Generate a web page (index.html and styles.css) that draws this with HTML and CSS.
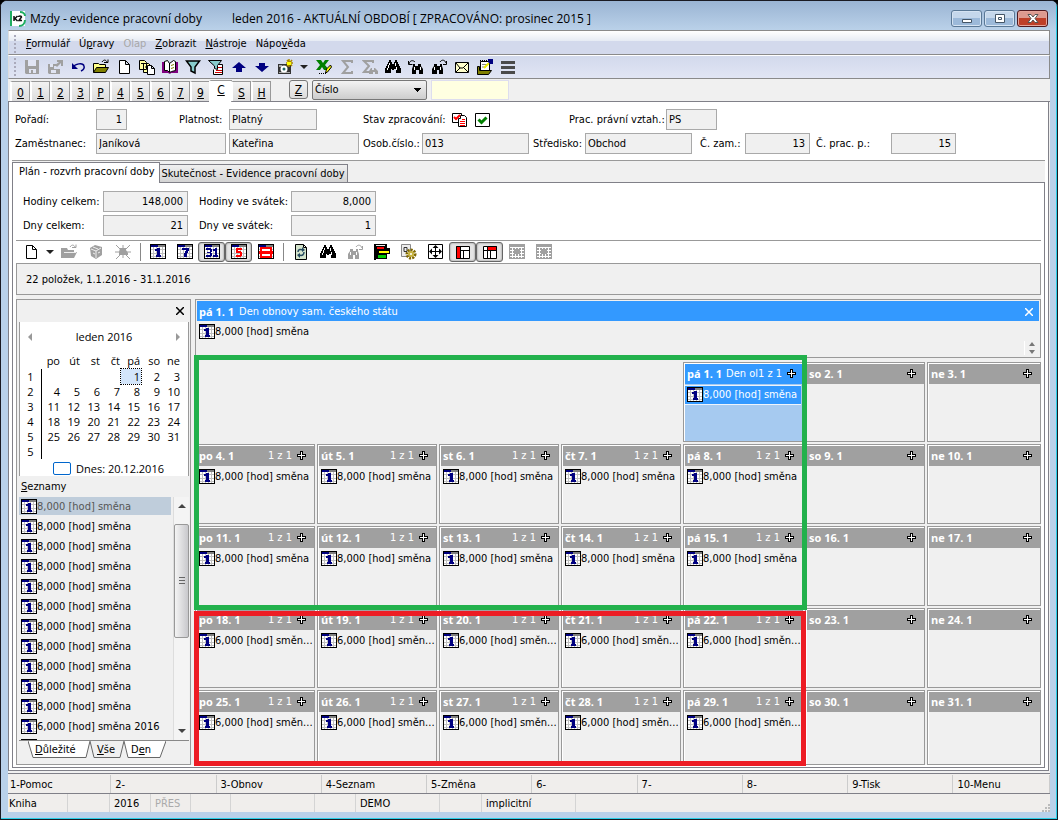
FILE: index.html
```html
<!DOCTYPE html>
<html lang="cs">
<head>
<meta charset="utf-8">
<title>Mzdy - evidence pracovní doby</title>
<link rel="stylesheet" href="styles.css">
</head>
<body>
<svg class="defs" aria-hidden="true">
  <defs>
    <symbol id="cal" viewBox="0 0 16 15" preserveAspectRatio="xMinYMin"><path fill="#000" d="M0 0h16v15H0z"/><path fill="#fff" d="M1 3h14v11H1z"/><path fill="#000080" d="M1 1h7v2H1z"/><path fill="#808080" d="M8 1h7v2H8z"/><path stroke="#c0c0c0" d="M1 5.500h14M1 9.500h14M1 12.500h14M3.500 3v11M6.500 3v11M9.500 3v11M12.500 3v11"/></symbol>
    <symbol id="cal1" viewBox="0 0 16 15" preserveAspectRatio="xMinYMin"><use href="#cal"/><path fill="#000080" d="M7 4h3v7h1v2H6v-2h1V7H5V5h2z"/></symbol>
    <symbol id="cal7" viewBox="0 0 16 15" preserveAspectRatio="xMinYMin"><use href="#cal"/><path fill="#000080" d="M5 4h7v3h-1v2h-1v4H7V9h1V7h1V6H5z"/></symbol>
    <symbol id="cal31" viewBox="0 0 16 15" preserveAspectRatio="xMinYMin"><use href="#cal"/><path fill="#000080" d="M2 4h5v1h1v3H7v1h1v3H7v1H2v-2h4V9H3V8h3V6H2zM11 4h2v7h1v2H9v-2h2V7H9V5h2z"/></symbol>
    <symbol id="cal5" viewBox="0 0 16 15" preserveAspectRatio="xMinYMin"><use href="#cal"/><path fill="#f00" d="M5 4h6v2H7v1h3v1h1v4h-1v1H5v-2h4V9H5z"/></symbol>
    <symbol id="calred" viewBox="0 0 16 15" preserveAspectRatio="xMinYMin"><use href="#cal"/><path fill="#f00" d="M2 3h12v4h1v3h-1v4H2v-4H1V7h1z"/><path fill="#fff" d="M4 5h8v2H4zM4 10h8v2H4z"/></symbol>
    <symbol id="plus" viewBox="0 0 9 9"><path fill="#000" d="M3 0h3v3h3v3H6v3H3V6H0V3h3z"/><path fill="#fff" d="M4 1h1v3h3v1H5v3H4V5H1V4h3z"/></symbol>
    <symbol id="save" viewBox="0 0 16 16"><path fill="#a0a0a0" d="M1 1h14v14H2l-1-1z"/><path fill="#e1e5f3" d="M4 1h8v6H4zM5 10h7v4H9v-3H7v3H5z"/></symbol>
    <symbol id="export" viewBox="0 0 16 16"><path fill="#a0a0a0" d="M1 5h8v2H7v3h6v5H2l-1-1zM10 1h6v6h-2V4l-4 4-2-2 4-3h-2z"/><path fill="#e1e5f3" d="M3 5h3v3H3zM4 11h5v3H4z"/></symbol>
    <symbol id="undo" viewBox="0 0 16 16"><path fill="none" stroke="#000080" stroke-width="1.500" d="M3 8c2-3 10-5 11-1 1 3-1 4-3 5"/><path fill="#000080" d="M2 4v6h6z"/></symbol>
    <symbol id="folder" viewBox="0 0 16 16"><path fill="#ff8" stroke="#000" d="M.5 13.500v-9h5l1 1h6v3"/><path fill="#808000" stroke="#000" d="M.5 13.500l3-5h12l-3 5z"/><path fill="none" stroke="#000" d="M9 3c2-3 4-2 5 0m-3 .5h4v-3"/></symbol>
    <symbol id="folderg" viewBox="0 0 16 16"><path fill="#a0a0a0" d="M0 14V4h6l1 2h6v2h3l-3 6z"/><path fill="none" stroke="#a0a0a0" d="M9 3c2-3 4-2 5 0m-3 .5h4v-3"/><path stroke="#eee" d="M3 8.500h12"/></symbol>
    <symbol id="new" viewBox="0 0 16 16"><path fill="#fff" stroke="#000" d="M3.500 1.500h6l4 4v9h-10zM9.500 1.500v4h4"/></symbol>
    <symbol id="copies" viewBox="0 0 16 16"><path fill="#ffffa0" stroke="#000" d="M.5 1.500h5l2 2v7h-7zM4.500 4.500h5l2 2v7h-7z"/><path fill="#fff" stroke="#000" d="M8.500 6.500h4l3 3v6h-7zM2 4.500h3M6 8h2M12.500 6.500v3h3"/></symbol>
    <symbol id="book" viewBox="0 0 16 16"><path fill="#800080" d="M0 3h3l5 10 5-10h3v11H9l-1 1-2-1H0z"/><path fill="#fff" stroke="#000" d="M2.500 11.500v-9l3-1 2 3 4-3 2 1v9l-4 1-2 1-2-2z"/><path stroke="#000" d="M7.500 4v9"/><path stroke="#808000" d="M9 6.500l3-1M9 9.500l3-1"/></symbol>
    <symbol id="filter" viewBox="0 0 16 16"><path fill="#8cc" stroke="#000" stroke-width="1.500" d="M1.500 2h13L10 8v6l-4-2V8z"/></symbol>
    <symbol id="filterdoc" viewBox="0 0 16 16"><path fill="#fff" stroke="#000" d="M7.500 5.500h7v10h-9v-5"/><path fill="#8cc" stroke="#000" d="M.5 1.500h13l-4 5v4l-3-1V7z"/><path stroke="#c00" d="M10 8.500h4M8 11.500h6M7 13.500h7"/></symbol>
    <symbol id="up" viewBox="0 0 16 16"><path fill="#000080" d="M8 3l7 6h-4v4H5V9H1z"/></symbol>
    <symbol id="down" viewBox="0 0 16 16"><path fill="#000080" d="M8 13l7-6h-4V4H5v3H1z"/></symbol>
    <symbol id="camera" viewBox="0 0 16 16"><path fill="#333" d="M1 5h13v10H1z"/><path fill="#aaa" d="M2 6h3v2H2zM2 13h11v1H2z"/><circle cx="7" cy="10" r="3.500" fill="#fff"/><circle cx="7" cy="10" r="1.500" fill="#266"/><path stroke="#a80" stroke-width="1.500" d="M12 0v8M9 4h7M10 1l5 6M15 1l-5 6"/><path fill="#ff0" d="M10 3h4v3h-4z"/></symbol>
    <symbol id="arrow" viewBox="0 0 8 8"><path fill="#222" d="M0 2h8L4 6z"/></symbol>
    <symbol id="excel" viewBox="0 0 16 16"><path fill="#008000" d="M0 1h5l2 3 2-3h4L9 6l4 5H8L6 8l-2 3H0l4-5z"/><path fill="#ff0" stroke="#000" d="M9.500 14l1-4 4-4 1 2-4 5z"/><path stroke="#000" stroke-dasharray="1 1" d="M3 14.500h8"/></symbol>
    <symbol id="sum" viewBox="0 0 16 16"><path fill="none" stroke="#a0a0a0" stroke-width="2" d="M13 4V2H4l5 6-5 6h9v-2"/></symbol>
    <symbol id="sum2" viewBox="0 0 16 16"><path fill="none" stroke="#a0a0a0" stroke-width="2" d="M11 4V2H2l5 5-5 6h7"/><path fill="#a0a0a0" d="M7 15v-3l2-3h1v2h2V9h1l3 3v3h-3v-2h-2v2z"/></symbol>
    <symbol id="binoc" viewBox="0 0 16 16"><path fill="currentColor" d="M4 1h2v2h1v2h2V3h1V1h2v2h1v2h1v2h1v2h1v5h-5v-4H9v1H7v-1H6v4H0V9h1V7h1V5h1V3h1z"/><path stroke="#fff" d="M4.500 4v2M3.500 6v3M2.500 9v2M10.500 4v3M11.500 8v3"/></symbol>
    <symbol id="binocl" viewBox="0 0 16 16"><path fill="currentColor" d="M5 5h2v2h3V5h3v2l2 3v5h-4v-4H8v4H4v-5l1-3z"/><path fill="none" stroke="currentColor" d="M1 5c1-4 4-4 6-2M.5 2v3.500h4"/><path stroke="#fff" d="M6.500 8v3M12.500 8v3"/></symbol>
    <symbol id="binocr" viewBox="0 0 16 16"><path fill="currentColor" d="M3 5h3v2h3V5h2v2l1 3v5H8v-4H6v4H1v-5l2-3z"/><path fill="none" stroke="currentColor" d="M9 3c2-3 5-2 6 1m-3 1.500h3.500V2"/><path stroke="#fff" d="M3.500 8v3M9.500 8v3"/></symbol>
    <symbol id="mail" viewBox="0 0 16 16"><path fill="#ffc" stroke="#000" d="M1.500 3.500h13v10h-13z"/><path fill="none" stroke="#000" d="M2 4l4 5h3l5-5M2 13l4-4M14 13l-4-4"/></symbol>
    <symbol id="note" viewBox="0 0 16 16"><path fill="#fff" stroke="#000" d="M3.500 11V2.500h9V11"/><path stroke="#000" stroke-dasharray="1 1" d="M3 1.500h10"/><path stroke="#888" d="M5 5.500h5M5 8h4"/><path fill="#808000" stroke="#000" d="M.5 15V7.500h2v4h12l-3 4H.5z"/><path stroke="#ee0" stroke-width="2" d="M7 9l5-5"/><path fill="#000080" d="M11 0h5v5h-3l-2-2z"/></symbol>
    <symbol id="lines" viewBox="0 0 16 16"><path fill="#4a4a4a" d="M1 2h14v3H1zM1 7h14v3H1zM1 12h14v3H1z"/></symbol>
    <symbol id="box" viewBox="0 0 16 16"><path fill="#a0a0a0" d="M2 4l5-3 7 2v8l-6 4-5-3z"/><path fill="none" stroke="#eee" d="M3 5l5 2 5-3M8 7v7M5 3l5 2M5 9l2 1M10 9l2-1"/></symbol>
    <symbol id="bug" viewBox="0 0 16 16"><path fill="#a0a0a0" d="M5 4h6v2l2 3v2H4V8z"/><path stroke="#a0a0a0" d="M1 1l4 4M15 1l-4 4M8 1v13M0 8h16M1 15l4-4M15 15l-4-4"/></symbol>
    <symbol id="refresh" viewBox="0 0 16 16"><path fill="#fff" stroke="#000" d="M2.500.5h8l3 3v12h-11zM10.500.5v3h3"/><path fill="#d4e4cc" d="M3 1h7v3h3v11H3z"/><path fill="none" stroke="#264a60" stroke-width="1.500" d="M5 8c0-3 3-3 5-2M11 8c0 3-2 4-5 3"/><path fill="#264a60" d="M9 3l3 3-3 2zM7 9l-3 2 3 3z"/></symbol>
    <symbol id="traffic" viewBox="0 0 16 16"><path fill="#000" d="M0 0h13v4h3v6h-3v5H2v1H0z"/><path fill="#eee" d="M2 1h9v1H2z"/><path fill="#f00" d="M3 3h7v2H3z"/><path fill="#ff0" d="M5 7h10v2H5z"/><path fill="#0c0" d="M4 11h8v3H4z"/></symbol>
    <symbol id="gear" viewBox="0 0 16 16"><path fill="#eee" stroke="#888" d="M.5.5h9v12h-9z"/><path fill="none" stroke="#333" d="M3 3.500h3v4H3z"/><circle cx="10" cy="10" r="4" fill="none" stroke="#806800" stroke-width="3" stroke-dasharray="2 1"/><circle cx="10" cy="10" r="3" fill="#c8b440"/><circle cx="10" cy="10" r="1" fill="#fff"/></symbol>
    <symbol id="expand" viewBox="0 0 16 16"><path fill="#fff" stroke="#000" d="M.5.5h14v14H.5zM7.500 2v11M2 7.500h11"/><path fill="#000" d="M7.500 1l3 3h-6zM7.500 14l3-3h-6zM1 7.500l3-3v6zM14 7.500l-3-3v6z"/></symbol>
    <symbol id="layl" viewBox="0 0 16 16"><path fill="#fff" stroke="#000" d="M1.500 2.500h13v12h-13zM5 6.500h9M8.500 6.500v8"/><path fill="#f00" stroke="#000" d="M1.500 2.500h4v12h-4z"/></symbol>
    <symbol id="layt" viewBox="0 0 16 16"><path fill="#fff" stroke="#000" d="M1.500 2.500h13v12h-13zM1.500 6.500h13M8.500 6.500v8M5.500 2.500v12"/><path fill="#f00" stroke="#000" d="M5.500 2.500h9v4h-9z"/></symbol>
    <symbol id="gridg" viewBox="0 0 16 16"><path fill="#a0a0a0" d="M0 0h16v15H0z"/><path stroke="#fff" d="M1 3.500h14M1 6.500h14M1 9.500h14M1 12.500h14M3.500 3v11M6.500 3v11M9.500 3v11M12.500 3v11"/><path fill="#a0a0a0" d="M5 5h6v5H5z"/></symbol>
  </defs>
</svg>

<div class="window">
  <header class="titlebar">
    <svg class="logo" viewBox="0 0 16 18"><path fill="#fff" d="M0 1h15v15H0z"/><path fill="#1fae62" d="M0 1h2v15H0z"/><path fill="none" stroke="#1fae62" stroke-width="2" d="M10 2c3 0 5 2 5 4M15 10c0 4-3 6-6 6"/><path fill="#fff" d="M2 4h10v8H2z"/><path stroke="#111" stroke-width="1.500" fill="none" d="M4 6v5M7.500 6L5 8.500 7.500 11M8.500 7c0-1.500 3-1.500 3 0L9 10.500h3"/></svg>
    <h1 class="title">Mzdy - evidence pracovní doby</h1>
    <span class="period">leden 2016 - AKTUÁLNÍ OBDOBÍ [ ZPRACOVÁNO: prosinec 2015 ]</span>
    <div class="winbtns">
      <button class="winbtn" aria-label="Minimalizovat"><svg viewBox="0 0 12 10"><path fill="#fff" stroke="#456" d="M1.500 5.500h9v3h-9z"/></svg></button>
      <button class="winbtn" aria-label="Maximalizovat"><svg viewBox="0 0 12 10"><path fill="#fff" stroke="#456" d="M1.500.5h9v8h-9zM4.500 3.500h3v2h-3z"/></svg></button>
      <button class="winbtn winbtn-close" aria-label="Zavřít"><svg viewBox="0 0 12 10"><path fill="#fff" stroke="#555" d="M1 .5h3L6 3 8 .5h3L8 4.500l3 4H8L6 6 4 8.500H1l3-4z"/></svg></button>
    </div>
  </header>

  <div class="client">
    <nav class="menubar">
      <span class="grip"></span>
      <button><u>F</u>ormulář</button><button>Ú<u>p</u>ravy</button><button disabled>Olap</button><button><u>Z</u>obrazit</button><button><u>N</u>ástroje</button><button>Nápo<u>v</u>ěda</button>
    </nav>
    <div class="toolbar">
      <span class="grip"></span>
      <button class="tb" aria-label="Uložit"><svg><use href="#save"/></svg></button>
      <button class="tb" aria-label="Uložit a zavřít"><svg><use href="#export"/></svg></button>
      <button class="tb" aria-label="Zpět"><svg><use href="#undo"/></svg></button>
      <button class="tb" aria-label="Otevřít"><svg><use href="#folder"/></svg></button>
      <button class="tb" aria-label="Nový"><svg><use href="#new"/></svg></button>
      <button class="tb" aria-label="Kopie"><svg><use href="#copies"/></svg></button>
      <button class="tb" aria-label="Kniha"><svg><use href="#book"/></svg></button>
      <button class="tb" aria-label="Filtr"><svg><use href="#filter"/></svg></button>
      <button class="tb" aria-label="Filtr dokladu"><svg><use href="#filterdoc"/></svg></button>
      <button class="tb" aria-label="Nahoru"><svg><use href="#up"/></svg></button>
      <button class="tb" aria-label="Dolů"><svg><use href="#down"/></svg></button>
      <button class="tb" aria-label="Snímek"><svg><use href="#camera"/></svg></button>
      <button class="tb tb-arrow" aria-label="Více"><svg><use href="#arrow"/></svg></button>
      <button class="tb" aria-label="Excel"><svg><use href="#excel"/></svg></button>
      <button class="tb" aria-label="Součet"><svg><use href="#sum"/></svg></button>
      <button class="tb" aria-label="Součty"><svg><use href="#sum2"/></svg></button>
      <button class="tb" aria-label="Hledat"><svg><use href="#binoc"/></svg></button>
      <button class="tb" aria-label="Hledat předchozí"><svg><use href="#binocl"/></svg></button>
      <button class="tb" aria-label="Hledat další"><svg><use href="#binocr"/></svg></button>
      <button class="tb" aria-label="Pošta"><svg><use href="#mail"/></svg></button>
      <button class="tb" aria-label="Poznámka"><svg><use href="#note"/></svg></button>
      <button class="tb" aria-label="Nabídka"><svg><use href="#lines"/></svg></button>
    </div>

    <div class="pagetabs">
      <button>0</button><button>1</button><button>2</button><button>3</button><button>P</button><button>4</button><button>5</button><button>6</button><button>7</button><button>9</button><button class="on">C</button><button>S</button><button>H</button>
      <button class="zbtn">Z</button>
      <select class="sortsel" aria-label="Řazení"><option>Číslo</option></select>
      <input class="quick" aria-label="Rychlé hledání">
    </div>

    <main class="page">
      <form class="form">
        <div class="row">
          <label class="lb-first" for="por">Pořadí:</label><input class="num w31" id="por" value="1" readonly>
          <label class="lb-plat" for="pla">Platnost:</label><input class="w88" id="pla" value="Platný" readonly>
          <span class="lb-stav">Stav zpracování:</span>
          <svg class="stav" viewBox="0 0 16 16"><path fill="#fff" stroke="#000" d="M.5 1.500h9v9h-9z"/><path fill="#fff" stroke="#000" d="M8.500 3.500h4l2 2v9h-8v-8h2z"/><path stroke="#f00" stroke-width="2" fill="none" d="M2 5l2 2 4-4"/><path stroke="#f00" d="M8 9.500h5M8 11.500h5M8 13.500h5M10 7.500h3"/></svg>
          <svg class="stav" viewBox="0 0 16 16"><path fill="#fff" stroke="#000" d="M.5 1.500h14v13H.5z"/><path stroke="#008000" stroke-width="3" fill="none" d="M3.500 7.500l3 3 5-5"/></svg>
          <label class="lb-vztah" for="ppv">Prac. právní vztah.:</label><input class="w51" id="ppv" value="PS" readonly>
        </div>
        <div class="row">
          <label class="lb-first" for="zam">Zaměstnanec:</label><input class="w130" id="zam" value="Janíková" readonly><input class="w130 name2" aria-label="Jméno" value="Kateřina" readonly>
          <label class="lb-osob" for="oso">Osob.číslo.:</label><input class="w107" id="oso" value="013" readonly>
          <label class="lb-str" for="str">Středisko:</label><input class="w107" id="str" value="Obchod" readonly>
          <label class="lb-czam" for="cza">Č. zam.:</label><input class="num w65" id="cza" value="13" readonly>
          <label class="lb-cprac" for="cpr">Č. prac. p.:</label><input class="num w65" id="cpr" value="15" readonly>
        </div>
      </form>

      <div class="tabs"><button class="tab on">Plán - rozvrh pracovní doby</button><button class="tab">Skutečnost - Evidence pracovní doby</button></div>

      <section class="sheet">
        <div class="totals">
          <label for="hc">Hodiny celkem:</label><input class="num" id="hc" value="148,000" readonly><label class="t2" for="hs">Hodiny ve svátek:</label><input class="num" id="hs" value="8,000" readonly>
          <label for="dc">Dny celkem:</label><input class="num" id="dc" value="21" readonly><label class="t2" for="ds">Dny ve svátek:</label><input class="num" id="ds" value="1" readonly>
        </div>
        <div class="tools2">
          <button class="tb" aria-label="Nový"><svg><use href="#new"/></svg></button>
          <button class="tb tb-arrow" aria-label="Více"><svg><use href="#arrow"/></svg></button>
          <button class="tb" aria-label="Otevřít" disabled><svg><use href="#folderg"/></svg></button>
          <button class="tb" aria-label="Smazat" disabled><svg><use href="#box"/></svg></button>
          <button class="tb" aria-label="Zrušit" disabled><svg><use href="#bug"/></svg></button>
          <span class="vsep"></span>
          <button class="tb" aria-label="Den"><svg><use href="#cal1"/></svg></button>
          <button class="tb" aria-label="Týden"><svg><use href="#cal7"/></svg></button>
          <button class="tb down" aria-label="Měsíc"><svg><use href="#cal31"/></svg></button>
          <button class="tb down" aria-label="Pracovní dny"><svg><use href="#cal5"/></svg></button>
          <button class="tb" aria-label="Seznam"><svg><use href="#calred"/></svg></button>
          <span class="vsep"></span>
          <button class="tb" aria-label="Obnovit"><svg><use href="#refresh"/></svg></button>
          <button class="tb" aria-label="Hledat"><svg><use href="#binoc"/></svg></button>
          <button class="tb" aria-label="Hledat další" disabled><svg><use href="#binocr"/></svg></button>
          <button class="tb" aria-label="Stavy"><svg><use href="#traffic"/></svg></button>
          <button class="tb" aria-label="Nastavení"><svg><use href="#gear"/></svg></button>
          <button class="tb" aria-label="Roztáhnout"><svg><use href="#expand"/></svg></button>
          <button class="tb down" aria-label="Levý panel"><svg><use href="#layl"/></svg></button>
          <button class="tb down" aria-label="Horní panel"><svg><use href="#layt"/></svg></button>
          <button class="tb" aria-label="Mřížka" disabled><svg><use href="#gridg"/></svg></button>
          <button class="tb" aria-label="Mřížka týdne" disabled><svg><use href="#gridg"/></svg></button>
        </div>
        <div class="info">22 položek, 1.1.2016 - 31.1.2016</div>

        <div class="split">
          <aside class="side">
            <div class="side-head"><button class="x" aria-label="Zavřít panel"><svg viewBox="0 0 8 8"><path stroke="#000" stroke-width="1.500" d="M0 0l8 8M8 0L0 8"/></svg></button></div>
            <div class="month">
              <div class="month-nav"><button aria-label="Předchozí"><svg viewBox="0 0 4 8"><path fill="#999" d="M4 0v8L0 4z"/></svg></button><span>leden 2016</span><button aria-label="Další"><svg viewBox="0 0 4 8"><path fill="#999" d="M0 0v8l4-4z"/></svg></button></div>
              <table>
                <thead><tr><th></th><th>po</th><th>út</th><th>st</th><th>čt</th><th>pá</th><th>so</th><th>ne</th></tr></thead>
                <tbody>
                <tr><td>1</td><td></td><td></td><td></td><td></td><td class="sel">1</td><td>2</td><td>3</td></tr>
                <tr><td>2</td><td>4</td><td>5</td><td>6</td><td>7</td><td>8</td><td>9</td><td>10</td></tr>
                <tr><td>3</td><td>11</td><td>12</td><td>13</td><td>14</td><td>15</td><td>16</td><td>17</td></tr>
                <tr><td>4</td><td>18</td><td>19</td><td>20</td><td>21</td><td>22</td><td>23</td><td>24</td></tr>
                <tr><td>5</td><td>25</td><td>26</td><td>27</td><td>28</td><td>29</td><td>30</td><td>31</td></tr>
                <tr><td>5</td><td></td><td></td><td></td><td></td><td></td><td></td><td></td></tr>
                </tbody>
              </table>
              <div class="today"><span class="today-box"></span>Dnes: 20.12.2016</div>
            </div>
            <div class="lists-title"><u>S</u>eznamy</div>
            <div class="lists">
              <ul>
                <li class="on"><svg class="ci"><use href="#cal1"/></svg>8,000 [hod] směna</li>
                <li><svg class="ci"><use href="#cal1"/></svg>8,000 [hod] směna</li>
                <li><svg class="ci"><use href="#cal1"/></svg>8,000 [hod] směna</li>
                <li><svg class="ci"><use href="#cal1"/></svg>8,000 [hod] směna</li>
                <li><svg class="ci"><use href="#cal1"/></svg>8,000 [hod] směna</li>
                <li><svg class="ci"><use href="#cal1"/></svg>8,000 [hod] směna</li>
                <li><svg class="ci"><use href="#cal1"/></svg>8,000 [hod] směna</li>
                <li><svg class="ci"><use href="#cal1"/></svg>8,000 [hod] směna</li>
                <li><svg class="ci"><use href="#cal1"/></svg>8,000 [hod] směna</li>
                <li><svg class="ci"><use href="#cal1"/></svg>8,000 [hod] směna</li>
                <li><svg class="ci"><use href="#cal1"/></svg>8,000 [hod] směna</li>
                <li><svg class="ci"><use href="#cal1"/></svg>6,000 [hod] směna 2016</li>
                <li><svg class="ci"><use href="#cal1"/></svg></li>
              </ul>
              <div class="scroll"><svg viewBox="0 0 8 8"><path fill="#444" d="M0 6h8L4 2z"/></svg><div class="track"><div class="thumb"></div></div><svg viewBox="0 0 8 8"><path fill="#444" d="M0 2h8L4 6z"/></svg></div>
            </div>
            <div class="side-tabs">
              <button><svg viewBox="0 0 62 18" preserveAspectRatio="none"><path fill="#fff" stroke="#666" d="M0 0l5 16.500h53L62 0"/></svg><span><u>D</u>ůležité</span></button>
              <button class="on"><svg viewBox="0 0 34 18" preserveAspectRatio="none"><path fill="#f0f0f0" stroke="#666" d="M0 0l4 16.500h26L34 0"/></svg><span><u>V</u>še</span></button>
              <button><svg viewBox="0 0 42 18" preserveAspectRatio="none"><path fill="#fff" stroke="#666" d="M0 0l4 16.500h32L42 0"/></svg><span>D<u>e</u>n</span></button>
            </div>
          </aside>

          <div class="main">
            <div class="detail">
              <div class="detail-head"><b>pá 1. 1</b><span>Den obnovy sam. českého státu</span><button class="x" aria-label="Zavřít detail"><svg viewBox="0 0 8 8"><path stroke="#fff" stroke-width="1.500" d="M0 0l8 8M8 0L0 8"/></svg></button></div>
              <div class="detail-body"><div class="item"><svg class="ci"><use href="#cal1"/></svg><span>8,000 [hod] směna</span></div>
              <span class="spin"><svg viewBox="0 0 8 12"><path fill="#777" d="M1 4h6L4 0zM1 8h6L4 12z"/></svg></span></div>
            </div>
            <div class="grid">
              <div class="day first sel"><div class="dh"><b>pá 1. 1</b><span class="hol">Den ol</span><span class="cnt">1 z 1</span><svg><use href="#plus"/></svg></div><div class="item"><svg class="ci"><use href="#cal1"/></svg><span>8,000 [hod] směna</span></div></div>
              <div class="day"><div class="dh"><b>so 2. 1</b><svg><use href="#plus"/></svg></div></div>
              <div class="day"><div class="dh"><b>ne 3. 1</b><svg><use href="#plus"/></svg></div></div>

              <div class="day"><div class="dh"><b>po 4. 1</b><span class="cnt">1 z 1</span><svg><use href="#plus"/></svg></div><div class="item"><svg class="ci"><use href="#cal1"/></svg><span>8,000 [hod] směna</span></div></div>
              <div class="day"><div class="dh"><b>út 5. 1</b><span class="cnt">1 z 1</span><svg><use href="#plus"/></svg></div><div class="item"><svg class="ci"><use href="#cal1"/></svg><span>8,000 [hod] směna</span></div></div>
              <div class="day"><div class="dh"><b>st 6. 1</b><span class="cnt">1 z 1</span><svg><use href="#plus"/></svg></div><div class="item"><svg class="ci"><use href="#cal1"/></svg><span>8,000 [hod] směna</span></div></div>
              <div class="day"><div class="dh"><b>čt 7. 1</b><span class="cnt">1 z 1</span><svg><use href="#plus"/></svg></div><div class="item"><svg class="ci"><use href="#cal1"/></svg><span>8,000 [hod] směna</span></div></div>
              <div class="day"><div class="dh"><b>pá 8. 1</b><span class="cnt">1 z 1</span><svg><use href="#plus"/></svg></div><div class="item"><svg class="ci"><use href="#cal1"/></svg><span>8,000 [hod] směna</span></div></div>
              <div class="day"><div class="dh"><b>so 9. 1</b><svg><use href="#plus"/></svg></div></div>
              <div class="day"><div class="dh"><b>ne 10. 1</b><svg><use href="#plus"/></svg></div></div>

              <div class="day"><div class="dh"><b>po 11. 1</b><span class="cnt">1 z 1</span><svg><use href="#plus"/></svg></div><div class="item"><svg class="ci"><use href="#cal1"/></svg><span>8,000 [hod] směna</span></div></div>
              <div class="day"><div class="dh"><b>út 12. 1</b><span class="cnt">1 z 1</span><svg><use href="#plus"/></svg></div><div class="item"><svg class="ci"><use href="#cal1"/></svg><span>8,000 [hod] směna</span></div></div>
              <div class="day"><div class="dh"><b>st 13. 1</b><span class="cnt">1 z 1</span><svg><use href="#plus"/></svg></div><div class="item"><svg class="ci"><use href="#cal1"/></svg><span>8,000 [hod] směna</span></div></div>
              <div class="day"><div class="dh"><b>čt 14. 1</b><span class="cnt">1 z 1</span><svg><use href="#plus"/></svg></div><div class="item"><svg class="ci"><use href="#cal1"/></svg><span>8,000 [hod] směna</span></div></div>
              <div class="day"><div class="dh"><b>pá 15. 1</b><span class="cnt">1 z 1</span><svg><use href="#plus"/></svg></div><div class="item"><svg class="ci"><use href="#cal1"/></svg><span>8,000 [hod] směna</span></div></div>
              <div class="day"><div class="dh"><b>so 16. 1</b><svg><use href="#plus"/></svg></div></div>
              <div class="day"><div class="dh"><b>ne 17. 1</b><svg><use href="#plus"/></svg></div></div>

              <div class="day"><div class="dh"><b>po 18. 1</b><span class="cnt">1 z 1</span><svg><use href="#plus"/></svg></div><div class="item"><svg class="ci"><use href="#cal1"/></svg><span>6,000 [hod] směn...</span></div></div>
              <div class="day"><div class="dh"><b>út 19. 1</b><span class="cnt">1 z 1</span><svg><use href="#plus"/></svg></div><div class="item"><svg class="ci"><use href="#cal1"/></svg><span>6,000 [hod] směn...</span></div></div>
              <div class="day"><div class="dh"><b>st 20. 1</b><span class="cnt">1 z 1</span><svg><use href="#plus"/></svg></div><div class="item"><svg class="ci"><use href="#cal1"/></svg><span>6,000 [hod] směn...</span></div></div>
              <div class="day"><div class="dh"><b>čt 21. 1</b><span class="cnt">1 z 1</span><svg><use href="#plus"/></svg></div><div class="item"><svg class="ci"><use href="#cal1"/></svg><span>6,000 [hod] směn...</span></div></div>
              <div class="day"><div class="dh"><b>pá 22. 1</b><span class="cnt">1 z 1</span><svg><use href="#plus"/></svg></div><div class="item"><svg class="ci"><use href="#cal1"/></svg><span>6,000 [hod] směn...</span></div></div>
              <div class="day"><div class="dh"><b>so 23. 1</b><svg><use href="#plus"/></svg></div></div>
              <div class="day"><div class="dh"><b>ne 24. 1</b><svg><use href="#plus"/></svg></div></div>

              <div class="day"><div class="dh"><b>po 25. 1</b><span class="cnt">1 z 1</span><svg><use href="#plus"/></svg></div><div class="item"><svg class="ci"><use href="#cal1"/></svg><span>6,000 [hod] směn...</span></div></div>
              <div class="day"><div class="dh"><b>út 26. 1</b><span class="cnt">1 z 1</span><svg><use href="#plus"/></svg></div><div class="item"><svg class="ci"><use href="#cal1"/></svg><span>6,000 [hod] směn...</span></div></div>
              <div class="day"><div class="dh"><b>st 27. 1</b><span class="cnt">1 z 1</span><svg><use href="#plus"/></svg></div><div class="item"><svg class="ci"><use href="#cal1"/></svg><span>6,000 [hod] směn...</span></div></div>
              <div class="day"><div class="dh"><b>čt 28. 1</b><span class="cnt">1 z 1</span><svg><use href="#plus"/></svg></div><div class="item"><svg class="ci"><use href="#cal1"/></svg><span>6,000 [hod] směn...</span></div></div>
              <div class="day"><div class="dh"><b>pá 29. 1</b><span class="cnt">1 z 1</span><svg><use href="#plus"/></svg></div><div class="item"><svg class="ci"><use href="#cal1"/></svg><span>6,000 [hod] směn...</span></div></div>
              <div class="day"><div class="dh"><b>so 30. 1</b><svg><use href="#plus"/></svg></div></div>
              <div class="day"><div class="dh"><b>ne 31. 1</b><svg><use href="#plus"/></svg></div></div>
              <div class="mark mark-green"></div>
              <div class="mark mark-red"></div>
            </div>
          </div>
        </div>
      </section>
    </main>

    <footer class="status">
      <div class="fkeys"><span>1-Pomoc</span><span>2-</span><span>3-Obnov</span><span>4-Seznam</span><span>5-Změna</span><span>6-</span><span>7-</span><span>8-</span><span>9-Tisk</span><span>10-Menu</span></div>
      <div class="cells"><span class="s60">Kniha</span><span class="s42"></span><span class="s41">2016</span><span class="s40 dim">PŘES</span><span class="s40"></span><span class="s84"></span><span class="s41"></span><span class="s84">DEMO</span><span class="s42"></span><span class="s94">implicitní</span><span class="rest"><svg viewBox="0 0 9 9"><path fill="#bbb" d="M7 1h2v2H7zM4 4h2v2H4zM7 4h2v2H7zM1 7h2v2H1zM4 7h2v2H4zM7 7h2v2H7z"/></svg></span></div>
    </footer>
  </div>
</div>
</body>
</html>
```
FILE: styles.css
```css
* { box-sizing: border-box; }
html, body { height: 100%; margin: 0; }
body { background: #000; font: 11px/14px "DejaVu Sans Condensed", "Noto Sans", sans-serif; color: #000; }
button, input, select { font: inherit; color: inherit; margin: 0; }
button { padding: 0; border: 0; background: none; white-space: nowrap; }
svg { display: block; flex: none; }
.defs { position: absolute; width: 0; height: 0; }

.window { height: 100%; min-height: 820px; display: flex; flex-direction: column; border: 1px solid #1a1a22; border-radius: 7px 7px 0 0; box-shadow: inset -1px -1px #29cfe8; background: #b9d1ea; padding: 0 7px 7px; overflow: hidden; }
.titlebar { height: 29px; margin: 0 -6px 0 -7px; padding: 6px 8px 0 9px; display: flex; align-items: center; background: linear-gradient(#9ab4d3, #bad1e9); font: 12px/20px "Open Sans", "Noto Sans", sans-serif; }
.logo { width: 16px; height: 18px; }
.title { margin: 0 0 0 4px; width: 202px; font: inherit; white-space: nowrap; }
.period { white-space: nowrap; }
.winbtns { margin-left: auto; display: flex; gap: 2px; }
.winbtn { width: 31px; height: 17px; border: 1px solid #5a7896; border-radius: 3px; box-shadow: inset 0 0 0 1px #d5e3f2; background: linear-gradient(#c5d7eb 50%, #9cb9d9 50%); display: grid; place-items: center; }
.winbtn svg { width: 12px; height: 10px; }
.winbtn-close { border-color: #501a20; box-shadow: inset 0 0 0 1px #e5a49a; background: linear-gradient(#dd9a90 50%, #be3f28 50%); }

.client { flex: 1; min-height: 0; display: flex; flex-direction: column; background: #f0f0f0; }
.menubar, .toolbar { display: flex; align-items: center; border: 1px solid #8a8a8a; border-left-color: #ddd; padding-left: 5px; }
.menubar { height: 25px; padding-top: 3px; background: linear-gradient(#fff, #e6ebf4 10px, #d3d9ec 10px); }
.toolbar { height: 24px; border-top: 1px solid #fff; background: linear-gradient(#d2d9ec, #e1e5f4); }
.menubar button { margin-left: 9px; }
.menubar .grip + button { margin-left: 10px; }
.menubar button:disabled { color: #a8a8a8; }
.grip { width: 2px; height: 18px; background: repeating-linear-gradient(#aab 0 2px, transparent 2px 4px); }
.tb { width: 23px; height: 20px; padding-left: 4px; display: grid; place-items: center start; }
.toolbar .grip + .tb { margin-left: 4px; }
.tb svg { width: 16px; height: 16px; }
.tb-arrow { width: 16px; }
.tb-arrow svg { width: 8px; height: 8px; }
.tb:disabled { color: #a0a0a0; }

.pagetabs { height: 23px; display: flex; align-items: flex-end; border-bottom: 1px solid #808088; padding-left: 2px; }
.pagetabs button { width: 20px; height: 20px; padding-top: 2px; border: 1px solid #999; border-left: 2px solid #fff; border-bottom: 0; text-decoration: underline; background: linear-gradient(#f2f2f2, #dcdcdc); font-size: 12px; }
.pagetabs .on { width: 23px; height: 22px; background: #fff; margin: 0 -1px -1px; padding: 0 0 3px; }
.pagetabs .zbtn { width: 19px; height: 19px; margin: 0 4px 2px 18px; padding: 0; border: 1px solid #777; border-radius: 3px; }
.sortsel { appearance: none; width: 115px; height: 20px; margin-bottom: 1px; padding: 0 2px; border: 1px solid #777; border-radius: 2px; background: linear-gradient(to bottom right, #000 50%, transparent 50%) right 4px center / 4px 4px no-repeat, linear-gradient(to bottom left, #000 50%, transparent 50%) right 8px center / 4px 4px no-repeat, linear-gradient(#f3f3f3, #cdcdcd); }
.quick { width: 78px; height: 20px; margin: 0 0 1px 4px; border: 1px solid #dde; background: #ffffe1; }

.page { flex: 1; min-height: 0; margin-right: 1px; display: flex; flex-direction: column; background: #fff; border: 1px solid #808088; border-top: 0; padding: 0 3px 2px; }
.form { padding: 7px 0 6px 3px; display: grid; gap: 3px; border-bottom: 1px solid #999; }
.row { display: flex; align-items: center; white-space: nowrap; }
input[readonly] { height: 21px; padding: 0 2px; border: 1px solid #a9a9a9; background: #f0f0f0; outline: 0; min-width: 0; }
input.num { text-align: right; padding-right: 4px; }
.w31 { width: 31px; } .w51 { width: 51px; } .w65 { width: 65px; } .w88 { width: 88px; } .w107 { width: 107px; } .w130 { width: 130px; }
.lb-first { width: 81px; }
.lb-plat { width: 102px; padding-left: 52px; }
.lb-stav { width: 135px; padding-left: 46px; }
.stav { width: 16px; height: 16px; margin-right: 7px; }
.lb-vztah { width: 168px; padding-left: 71px; }
.name2 { margin-left: 3px; }
.lb-osob { width: 63px; padding-left: 4px; }
.lb-str { width: 56px; padding-left: 4px; }
.lb-czam { width: 53px; padding-left: 8px; }
.lb-cprac { width: 81px; padding-left: 6px; }

.tabs { height: 22px; display: flex; align-items: flex-end; background: #f0f0f0; border-bottom: 1px solid #808088; }
.tab { height: 18px; padding: 0 2px; border: 1px solid #808088; border-left: 0; border-bottom: 0; background: linear-gradient(#f0f0f0, #d4d4d4); }
.tab.on { height: 21px; margin-bottom: -1px; border-left: 1px solid #808088; padding: 0 4px 2px 6px; background: #fff; }

.sheet { flex: 1; min-height: 0; display: flex; flex-direction: column; border: 1px solid #808088; border-top: 0; padding: 0 3px 2px; }
.totals { display: grid; grid-template-columns: 80px 85px 103px 85px; gap: 3px 0; align-items: center; padding: 8px 0 4px 7px; }
.totals .t2 { padding-left: 11px; }
.tools2 { height: 23px; display: flex; align-items: center; border-top: 1px solid #999; padding-left: 1px; }
.tools2 .tb { width: 27px; height: 20px; padding-left: 6px; }
.tools2 .tb-arrow { width: 11px; padding-left: 2px; }
.tools2 .down { border: 1px solid #666; border-radius: 3px; background: #e4e4e4; box-shadow: inset 0 0 2px #777; padding-left: 5px; }
.vsep { width: 1px; height: 18px; margin: 0 3px 0 4px; background: #888; }
.info { height: 32px; border: 1px solid #999; background: #f0f0f0; padding: 9px; }

.split { flex: 1; min-height: 0; display: flex; gap: 4px; background: #f0f0f0; padding-top: 4px; }
.side { width: 175px; flex: none; display: flex; flex-direction: column; border: 1px solid #999; padding: 0 1px 5px 2px; }
.side-head { height: 22px; display: flex; justify-content: flex-end; align-items: center; padding-right: 5px; }
.x { width: 8px; height: 8px; }
.x svg { width: 8px; height: 8px; }
.month { height: 154px; border: 1px solid #999; border-width: 0 1px; background: #fff; font: 11px/15px "Open Sans", "Noto Sans", sans-serif; }
.month-nav { height: 29px; display: flex; justify-content: space-between; align-items: center; padding: 0 8px; }
.month-nav svg { width: 4px; height: 8px; }
.month table { border-collapse: collapse; table-layout: fixed; width: 159px; font-size: 11px; }
.month th, .month td { width: 20px; height: 15px; padding: 0 1px 0 0; text-align: right; font-weight: 400; line-height: 15px; }
.month th { height: 18px; }
.month th:first-child, .month td:first-child { width: 21px; padding-right: 7px; }
.month td:first-child { border-right: 1px solid #000; }
.month td.sel { outline: 1px dotted #000; background: #d3e5fa; }
.today { display: flex; align-items: center; gap: 5px; padding: 0 0 0 33px; height: 18px; }
.today-box { width: 18px; height: 13px; border: 1px solid #06c; border-radius: 2px; }
.lists-title { height: 21px; padding: 4px 2px; }
.lists { flex: 1 1 0; min-height: 0; display: flex; border-bottom: 1px solid #888; overflow: hidden; }
.lists ul { flex: 1; margin: 0 2px 0 0; padding: 0; list-style: none; overflow: hidden; }
.lists li { height: 20px; display: flex; align-items: center; padding-left: 2px; white-space: nowrap; }
.lists li.on { background: linear-gradient(#bfcddb, #bfcddb) 0 0 / 100% 18px no-repeat; color: #555; }
.ci { width: 16px; height: 15px; margin-bottom: 1px; shape-rendering: crispEdges; }
.scroll { width: 16px; display: flex; flex-direction: column; align-items: center; padding: 5px 0; background: #f4f4f4; border-left: 1px solid #ddd; }
.scroll > svg { width: 8px; height: 8px; }
.track { flex: 1; align-self: stretch; padding-top: 14px; }
.thumb { height: 56%; border: 1px solid #999; border-radius: 2px; background: repeating-linear-gradient(#666 0 1px, transparent 1px 3px) center / 6px 8px no-repeat, linear-gradient(90deg, #f4f4f4, #c8c8cc); }
.side-tabs { height: 18px; display: flex; padding-left: 9px; }
.side-tabs button { display: grid; width: 62px; height: 18px; text-align: left; }
.side-tabs button + button { width: 34px; }
.side-tabs button + button + button { width: 42px; }
.side-tabs svg, .side-tabs span { grid-area: 1 / 1; width: 100%; height: 18px; line-height: 18px; }
.side-tabs span { padding-left: 7px; }

.main { flex: 1; min-width: 0; display: flex; flex-direction: column; gap: 4px; }
.detail { height: 59px; flex: none; border: 1px solid #999; padding: 1px; }
.detail-head { height: 20px; display: flex; align-items: center; gap: 5px; background: #39f; color: #fff; padding: 1px 6px 0 2px; }
.detail-head b, .dh b { flex: none; font-family: "Open Sans", "Noto Sans", sans-serif; }
.detail-head .x { margin-left: auto; }
.detail-body { display: flex; justify-content: space-between; }
.item { height: 18px; display: flex; align-items: center; padding-left: 2px; white-space: nowrap; overflow: hidden; margin-top: 2px; }
.spin { width: 15px; height: 14px; margin-top: 20px; display: grid; place-items: center; border-left: 1px solid #fff; }
.spin svg { width: 8px; height: 12px; }
.grid { flex: 1; min-height: 0; position: relative; display: grid; grid-template-columns: repeat(6, 120fr) 114fr; grid-template-rows: repeat(4, 80fr) 75fr; gap: 2px; }
.day { min-width: 0; min-height: 0; border: 1px solid #999; padding-top: 1px; background: #f0f0f0; box-shadow: inset 1px 1px #fff; overflow: hidden; }
.first { grid-column: 5; }
.dh { height: 20px; margin-left: 1px; display: flex; align-items: center; padding: 0 8px 0 2px; background: #a0a0a0; color: #fff; white-space: nowrap; }
.dh svg { width: 9px; height: 9px; margin: 0 0 2px auto; }
.dh .cnt { margin-left: auto; }
.dh .cnt + svg { margin-left: 5px; }
.hol { margin-left: 4px; }
.day .item { padding-left: 3px; }
.sel.day { background: #a6caf0; }
.day.sel .dh { background: #39f; }
.day.sel .item { background: #39f; color: #fff; margin: 1px 1px 0; padding-left: 2px; border: 1px solid #eef4fc; border-width: 1px 0; height: 20px; }
.mark { position: absolute; border: 5px solid; pointer-events: none; }
.mark-green { grid-area: 1 / 1 / 4 / 6; inset: -7px -4px -4px -1px; border-color: #22b14c; }
.mark-red { grid-area: 4 / 1 / 6 / 6; inset: 3px -3px -1px -1px; border-color: #ed1c24; }

.status { padding-top: 2px; }
.fkeys, .cells { display: flex; background: #f0eeec; white-space: nowrap; }
.fkeys { height: 20px; border-top: 1px solid #808088; padding-top: 1px; }
.fkeys span { flex: 105 1 0; border-right: 1px solid #ccc; padding: 3px 0 0 4px; }
.fkeys span:first-child { padding-left: 2px; }
.fkeys span:last-child { flex-grow: 96; }
.cells { height: 19px; border-top: 1px solid #808088; }
.cells span { border-right: 1px solid #d4d4d4; padding: 3px 4px 2px; flex: none; }
.cells .s60 { width: 60px; padding-left: 1px; }
.s40 { width: 40px; } .s41 { width: 41px; } .s42 { width: 42px; } .s84 { width: 84px; } .s94 { width: 94px; }
.dim { color: #aaa; }
.cells .rest { flex: 1; border: 0; display: flex; justify-content: flex-end; align-items: flex-end; padding: 0; }
.rest svg { width: 9px; height: 9px; }
```
